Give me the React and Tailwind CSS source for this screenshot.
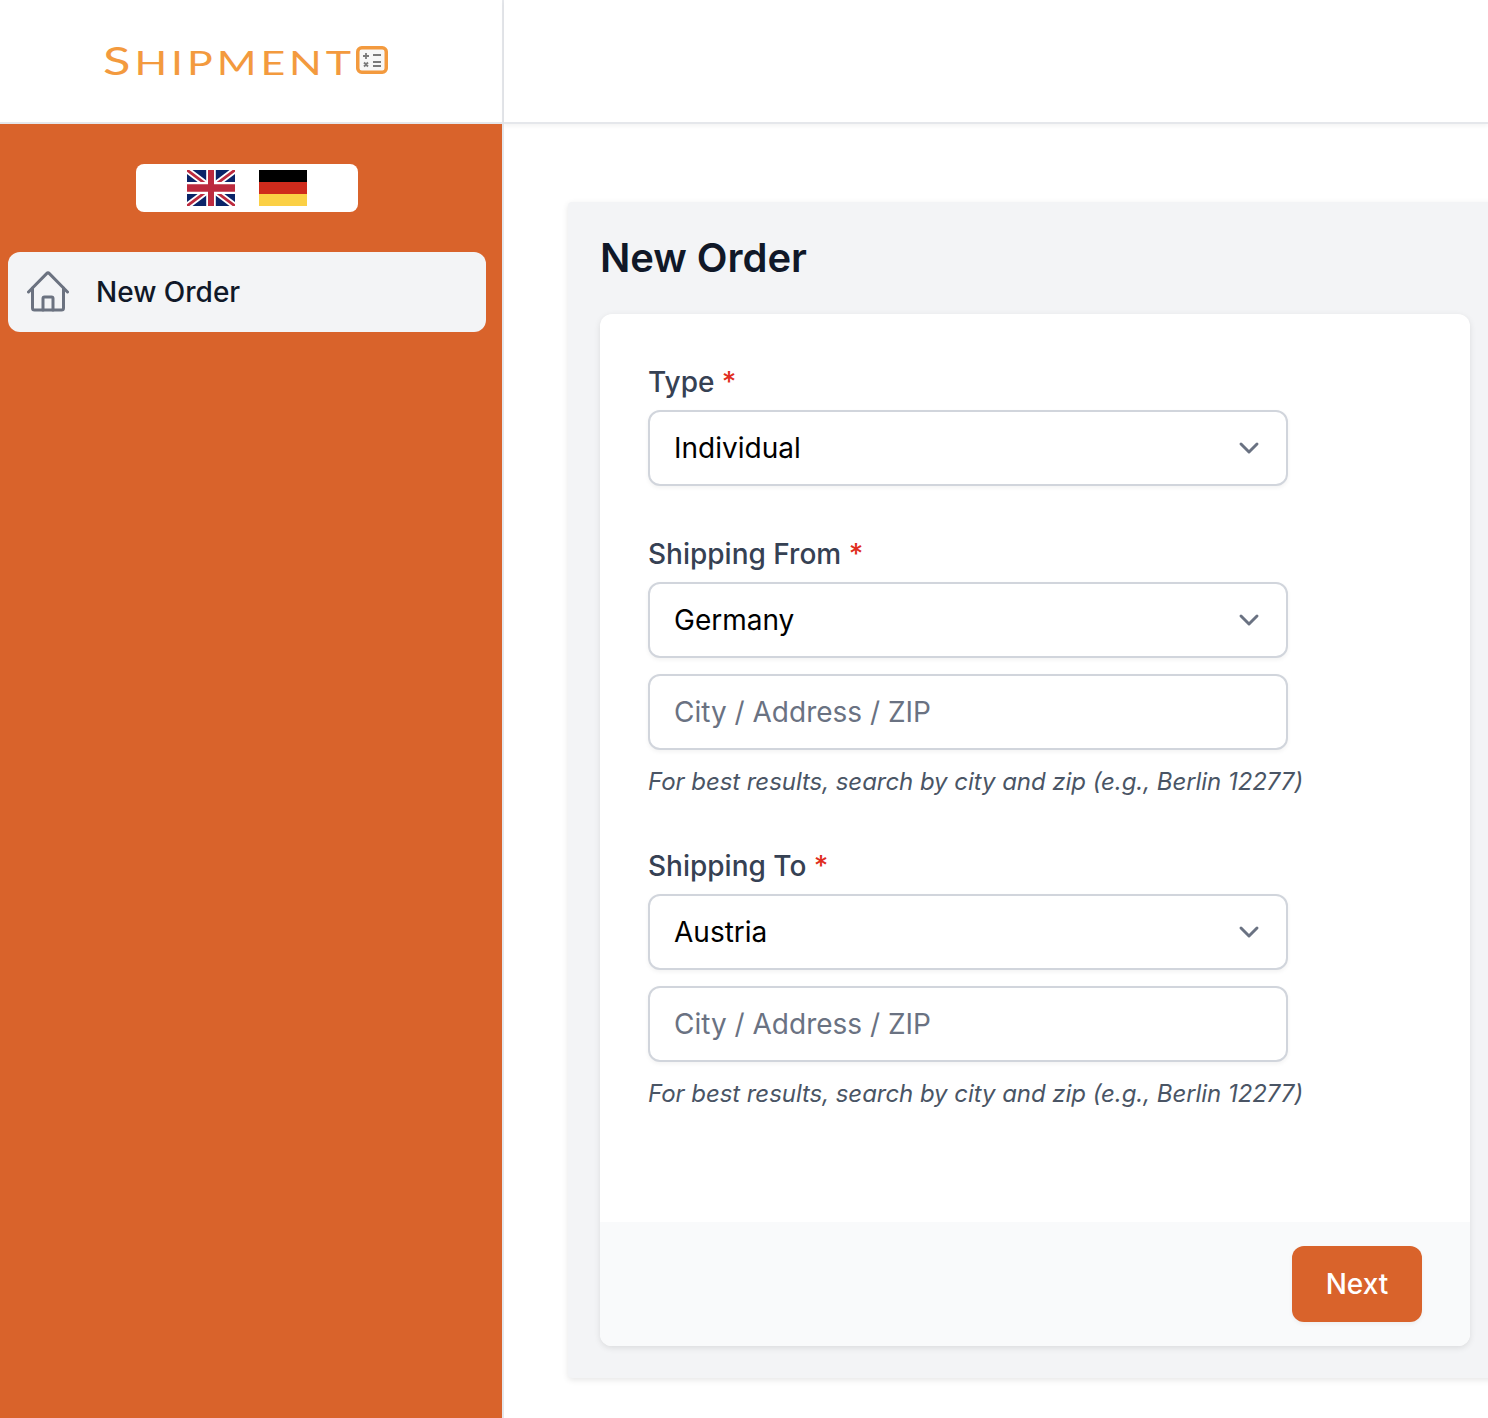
import React from 'react';
import { ChevronDown } from 'lucide-react';

const UkFlag = () => (
    <svg viewBox="0 0 60 36" preserveAspectRatio="none" className="w-12 h-9">
        <rect width="60" height="36" fill="#0a2468" />
        <path d="M0 0L60 36M60 0L0 36" stroke="#fff" strokeWidth="7" />
        <path d="M0 0L60 36M60 0L0 36" stroke="#bc2a3e" strokeWidth="3" />
        <path d="M30 0V36M0 18H60" stroke="#fff" strokeWidth="12" />
        <path d="M30 0V36M0 18H60" stroke="#bc2a3e" strokeWidth="7.5" />
    </svg>
);

const DeFlag = () => (
    <div className="w-12 h-9 flex flex-col">
        <div className="h-3 bg-black"></div>
        <div className="h-3 bg-[#cf2b1c]"></div>
        <div className="h-3 bg-[#fbd045]"></div>
    </div>
);

const HouseIcon = () => (
    <svg viewBox="0 0 42 42" fill="none" stroke="#6b7280" strokeWidth="3" strokeLinecap="round" strokeLinejoin="round" className="w-[42px] h-[42px]">
        <path d="M1.5 21L19.6 2.6a2 2 0 0 1 2.8 0L40.5 21" />
        <path d="M5.5 17V37a2 2 0 0 0 2 2H34.5a2 2 0 0 0 2-2V17" />
        <path d="M16 39V27.5a1.5 1.5 0 0 1 1.5-1.5h7a1.5 1.5 0 0 1 1.5 1.5V39" />
    </svg>
);

const CalcIcon = () => (
    <svg viewBox="0 0 32 28" fill="none" className="w-8 h-7 shrink-0">
        <rect x="1.75" y="1.75" width="28.5" height="24.5" rx="4" stroke="#f39a3e" strokeWidth="3.5" fill="#f7f7f7" />
        <path d="M7 10H13M10 7V13M8 16.5L12 20.5M12 16.5L8 20.5M17 9H25M17 16H25M17 20H25" stroke="#7a7a7a" strokeWidth="1.8" />
    </svg>
);

const Label = ({ children }) => (
    <label className="block text-[28px] leading-10 font-medium text-gray-700">
        {children} <span className="text-[#e02d20]">*</span>
    </label>
);

const Select = ({ value }) => (
    <div className="h-[76px] w-[640px] border-2 border-gray-300 rounded-xl bg-white flex items-center justify-between pl-6 pr-[21px] shadow-[0_2px_4px_rgba(0,0,0,0.05)] text-[28px] text-black">
        {value}
        <ChevronDown className="w-8 h-8 text-gray-500" strokeWidth={2.2} />
    </div>
);

const AddressInput = () => (
    <div className="mt-4 h-[76px] w-[640px] border-2 border-gray-300 rounded-xl bg-white flex items-center pl-6 shadow-[0_2px_4px_rgba(0,0,0,0.05)] text-[28px] text-gray-500">
        City / Address / ZIP
    </div>
);

const Hint = () => (
    <p className="mt-3 text-[24px] leading-10 tracking-[-0.05px] italic text-gray-600 whitespace-nowrap">
        For best results, search by city and zip (e.g., Berlin 12277)
    </p>
);

const App = () => {
    return (
        <div className="h-[1418px] w-[1488px] overflow-hidden flex bg-white font-['Inter',sans-serif]">
            <aside className="w-[504px] shrink-0 flex flex-col border-r-2 border-gray-200">
                <div className="h-[124px] shrink-0 bg-white border-b-2 border-gray-200 flex items-center pl-[103px] pb-[2px]">
                    <div className="w-[253px] shrink-0 pt-[2px]">
                        <span className="text-[#f39a3e] font-['Lato',sans-serif] font-normal text-[33px] leading-none tracking-[3px] inline-block scale-x-[1.3] origin-left whitespace-nowrap">
                            <span className="text-[39px]">S</span>HIPMENT
                        </span>
                    </div>
                    <CalcIcon />
                </div>
                <div className="flex-1 bg-[#d9632b] pt-10">
                    <div className="ml-[136px] w-[222px] h-12 bg-white rounded-lg flex items-center justify-center gap-6">
                        <UkFlag />
                        <DeFlag />
                    </div>
                    <nav className="mt-10 pl-2 pr-4">
                        <div className="h-20 rounded-xl bg-gray-100 flex items-center pl-[19px] text-[28px] font-medium text-gray-900">
                            <HouseIcon />
                            <span className="ml-[27px]">New Order</span>
                        </div>
                    </nav>
                </div>
            </aside>
            <main className="flex-1 min-w-0 flex flex-col">
                <div className="h-[124px] shrink-0 bg-white border-b-2 border-gray-200 shadow-[0_2px_4px_rgba(0,0,0,0.05)]"></div>
                <div className="pt-[78px] pl-16">
                    <div className="w-[934px] h-[1176px] bg-gray-100 rounded-sm shadow-[0_2px_6px_rgba(0,0,0,0.1)] px-8 pt-8">
                        <h1 className="text-[40px] leading-[48px] font-semibold tracking-[-0.05px] text-gray-900">New Order</h1>
                        <div className="mt-8 h-[1032px] bg-white rounded-xl shadow-[0_2px_6px_rgba(0,0,0,0.1)] overflow-hidden flex flex-col">
                            <div className="flex-1 px-12 pt-12">
                                <Label>Type</Label>
                                <div className="mt-2"><Select value="Individual" /></div>
                                <div className="mt-12"><Label>Shipping From</Label></div>
                                <div className="mt-2"><Select value="Germany" /></div>
                                <AddressInput />
                                <Hint />
                                <div className="mt-11"><Label>Shipping To</Label></div>
                                <div className="mt-2"><Select value="Austria" /></div>
                                <AddressInput />
                                <Hint />
                            </div>
                            <div className="h-[124px] shrink-0 bg-gray-50 flex items-center justify-end px-12">
                                <button className="w-[130px] h-[76px] rounded-xl bg-[#d9632b] text-white text-[28px] font-medium shadow-[0_2px_4px_rgba(0,0,0,0.05)]">Next</button>
                            </div>
                        </div>
                    </div>
                </div>
            </main>
        </div>
    );
};

export default App;
